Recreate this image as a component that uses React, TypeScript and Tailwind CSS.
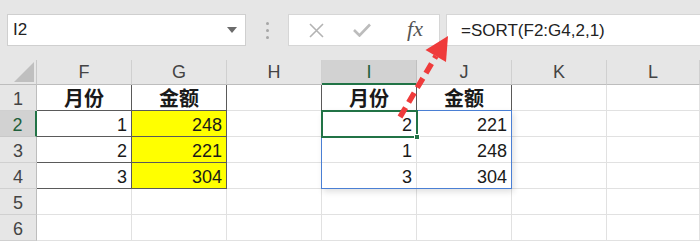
import React from "react";

const font = { fontFamily: '"Liberation Sans", "Noto Sans CJK SC", Arial, sans-serif' };
const cjk = { fontFamily: '"Noto Sans CJK SC", sans-serif' };

type Cell = { text?: string; align?: "right" | "center"; bold?: boolean; yellow?: boolean; dark?: boolean };

const cols = ["F", "G", "H", "I", "J", "K", "L"];

const data: Record<string, Cell> = {
  F1: { text: "月份", align: "center", bold: true, dark: true },
  G1: { text: "金额", align: "center", bold: true, dark: true },
  F2: { text: "1", align: "right", dark: true },
  G2: { text: "248", align: "right", yellow: true, dark: true },
  F3: { text: "2", align: "right", dark: true },
  G3: { text: "221", align: "right", yellow: true, dark: true },
  F4: { text: "3", align: "right", dark: true },
  G4: { text: "304", align: "right", yellow: true, dark: true },
  I1: { text: "月份", align: "center", bold: true, dark: true },
  J1: { text: "金额", align: "center", bold: true, dark: true },
  I2: { text: "2", align: "right" },
  J2: { text: "221", align: "right" },
  I3: { text: "1", align: "right" },
  J3: { text: "248", align: "right" },
  I4: { text: "3", align: "right" },
  J4: { text: "304", align: "right" },
};

function GridCell({ id }: { id: string }) {
  const c = data[id] || {};
  const darkRight = c.dark || id === "H1";
  const darkBottom = c.dark;
  return (
    <div
      className={`flex items-center px-[4px] border-r border-b leading-none text-[#1a1a1a] ${
        c.bold ? "text-[20px] font-bold pt-[1px]" : "text-[18px] pt-[3px]"
      } ${c.yellow ? "bg-[#ffff00]" : "bg-white"} ${darkRight ? "border-r-[#5a5a5a]" : "border-r-[#e1e1e1]"} ${
        darkBottom ? "border-b-[#5a5a5a]" : "border-b-[#e1e1e1]"
      } ${c.align === "right" ? "justify-end" : "justify-center"}`}
      style={c.bold ? cjk : font}
    >
      {c.text}
    </div>
  );
}

export default function App() {
  const rows = [1, 2, 3, 4, 5, 6];
  return (
    <div className="relative w-[700px] h-[241px] overflow-hidden bg-white" style={font}>
      {/* Top bar */}
      <div className="h-[60px] bg-[#e6e6e6] flex items-start pt-[14px] pl-[7px]">
        <div className="w-[239px] h-[32px] bg-white border border-[#cfcfcf] flex items-center justify-between pl-[5px] pr-[8px]">
          <span className="text-[17px] text-[#222]">I2</span>
          <svg width="10" height="6" viewBox="0 0 10 6">
            <path d="M0 0 L10 0 L5 6 Z" fill="#6b6b6b" />
          </svg>
        </div>
        <div className="w-[42px] h-[32px] flex flex-col items-center justify-center gap-[4px]">
          <div className="w-[3px] h-[3px] rounded-full bg-[#a6a6a6]" />
          <div className="w-[3px] h-[3px] rounded-full bg-[#a6a6a6]" />
          <div className="w-[3px] h-[3px] rounded-full bg-[#a6a6a6]" />
        </div>
        <div className="w-[152px] h-[32px] bg-white border border-[#d6d6d6] flex items-center">
          <div className="w-[50px] flex justify-center pl-[4px]">
            <svg width="15" height="15" viewBox="0 0 15 15">
              <path d="M1 1 L14 14 M14 1 L1 14" stroke="#b3b3b3" strokeWidth="1.6" />
            </svg>
          </div>
          <div className="w-[46px] flex justify-center">
            <svg width="18" height="14" viewBox="0 0 18 14">
              <path d="M1 7 L6.5 12.5 L17 1.5" stroke="#bcbcbc" strokeWidth="2.6" fill="none" />
            </svg>
          </div>
          <div
            className="w-[54px] flex justify-center pl-[6px] italic text-[22px] text-[#555] leading-none pb-[2px]"
            style={{ fontFamily: '"Liberation Serif", "Times New Roman", serif' }}
          >
            fx
          </div>
        </div>
        <div className="ml-[6px] flex-1 h-[32px] bg-white border border-[#d6d6d6] border-r-0 flex items-center pl-[14px]">
          <span className="text-[17px] text-[#222] pt-[1px]">=SORT(F2:G4,2,1)</span>
        </div>
      </div>

      {/* Grid */}
      <div className="relative grid grid-cols-[37px_repeat(6,95px)_1fr] grid-rows-[25px_repeat(6,26px)]">
        <div className="bg-[#e6e6e6] border-r border-b border-r-[#c8c8c8] border-b-[#bdbdbd] flex items-end justify-end p-[2px]">
          <svg width="20" height="20" viewBox="0 0 20 20">
            <path d="M20 0 L20 20 L0 20 Z" fill="#bfbfbf" />
          </svg>
        </div>
        {cols.map((c) => {
          const sel = c === "I";
          return (
            <div
              key={c}
              className={`flex items-center justify-center text-[18px] leading-none border-r ${
                sel
                  ? "bg-[#d2d2d2] text-[#1f5f3b] border-b-2 border-b-[#217346] border-r-[#c0c0c0]"
                  : "bg-[#e6e6e6] text-[#444] border-b border-b-[#bdbdbd] border-r-[#d0d0d0]"
              }`}
            >
              {c}
            </div>
          );
        })}
        {rows.map((r) => (
          <React.Fragment key={r}>
            <div
              className={`flex items-center justify-center text-[18px] leading-none border-b pt-[2px] ${
                r === 2
                  ? "bg-[#d2d2d2] text-[#1f5f3b] border-r-2 border-r-[#217346] border-b-[#c8c8c8]"
                  : "bg-[#e6e6e6] text-[#444] border-r border-r-[#bdbdbd] border-b-[#d0d0d0]"
              }`}
            >
              {r}
            </div>
            {cols.map((c) => (
              <GridCell key={c + r} id={c + r} />
            ))}
          </React.Fragment>
        ))}

        <div className="absolute col-start-5 col-end-7 row-start-3 row-end-6 -left-[1px] -top-[1px] right-0 bottom-0 border border-[#4a7fd4] shadow-[2px_3px_6px_rgba(0,0,0,0.12)] pointer-events-none" />
        <div className="absolute col-start-5 col-end-6 row-start-3 row-end-4 -left-[1px] -top-[1px] -right-[1px] -bottom-[1px] border-2 border-[#217346] pointer-events-none">
          <div className="absolute -right-[4px] -bottom-[4px] w-[6px] h-[6px] bg-[#217346] border border-white" />
        </div>
      </div>

      <svg className="absolute left-0 top-0 pointer-events-none" width="700" height="241" viewBox="0 0 700 241">
        <line x1="400" y1="117" x2="436" y2="56" stroke="#ef3b3b" strokeWidth="5.5" strokeDasharray="11 6" />
        <path d="M448 36 L446 62 L425.5 50 Z" fill="#ef3b3b" />
      </svg>
    </div>
  );
}
